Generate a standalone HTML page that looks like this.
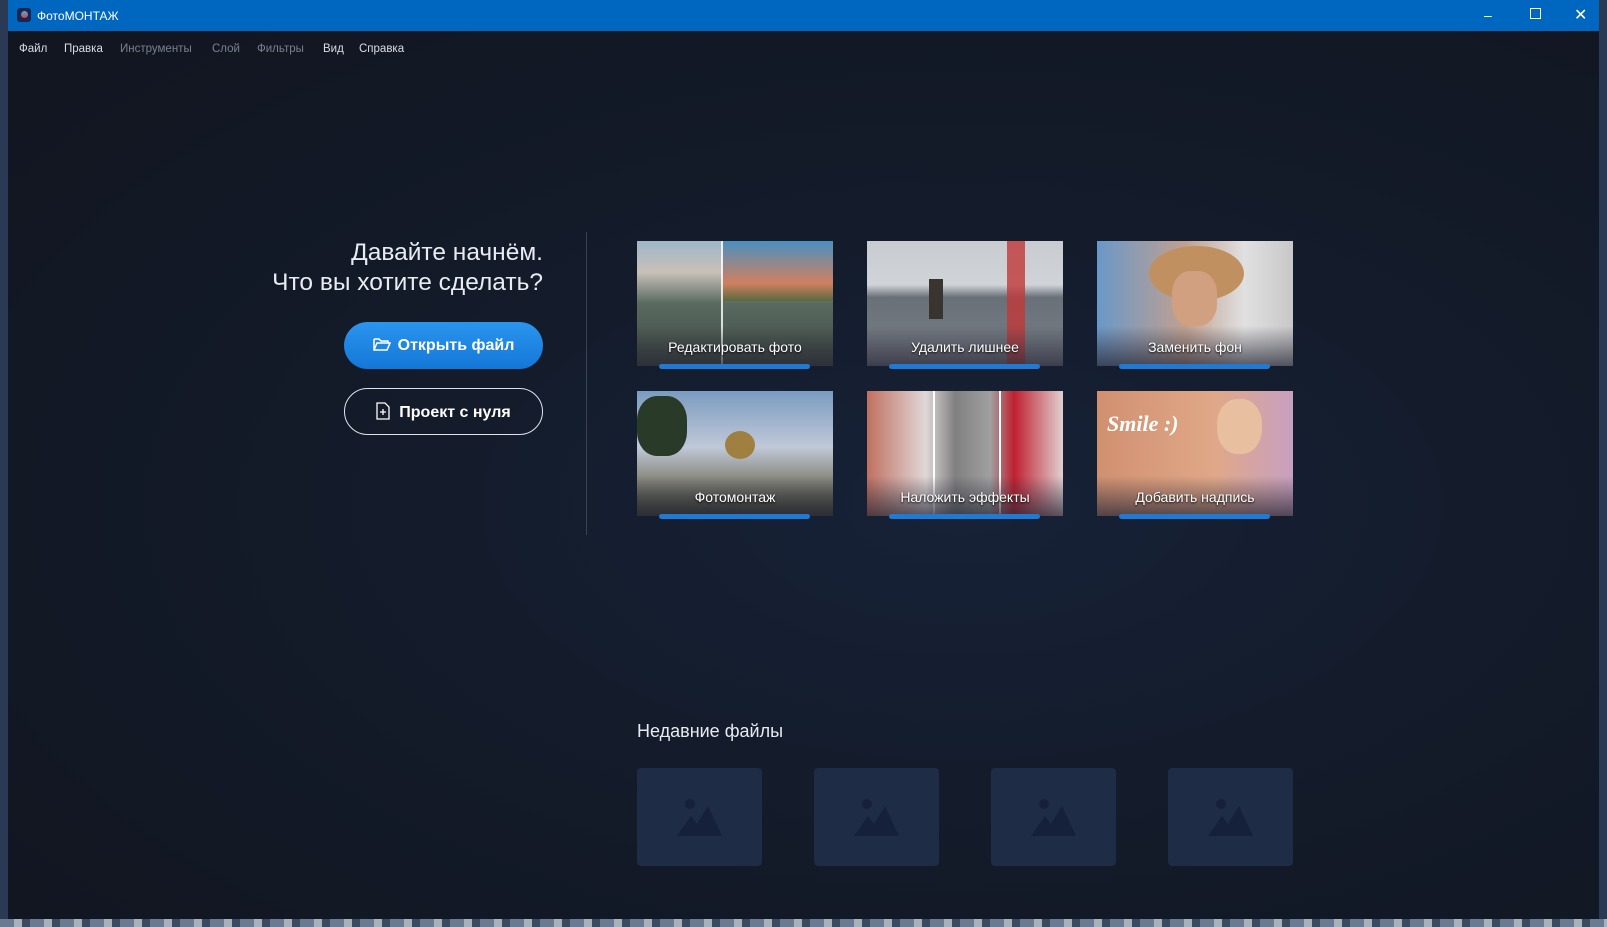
<!DOCTYPE html>
<html><head><meta charset="utf-8"><style>
*{margin:0;padding:0;box-sizing:border-box}
body{width:1607px;height:927px;overflow:hidden;background:#2a3a55;font-family:"Liberation Sans","DejaVu Sans",sans-serif;position:relative}
.desk{position:absolute;left:0;top:919px;width:1607px;height:8px;background:repeating-linear-gradient(90deg,#6a7a90 0 14px,#a8b0bc 14px 22px,#3a4a60 22px 30px)}
.win{position:absolute;left:8px;top:0;width:1591px;height:919px;background:radial-gradient(ellipse at 60% 55%,#172238 0%,#131a28 50%,#11151f 100%)}
.tb{position:absolute;left:0;top:0;width:100%;height:31px;background:#0067c0;color:#fff;font-size:12px}
.tb .ic{position:absolute;left:9px;top:8px;width:14px;height:14px;background:#1c2550;border-radius:3px}
.tb .ic:after{content:"";position:absolute;left:4px;top:3px;width:7px;height:7px;border-radius:50%;background:linear-gradient(#5ac,#c45)}
.tb .t{position:absolute;left:29px;top:9px}
.ctl{position:absolute;top:7px;color:#fff;font-size:14px}
.menu{position:absolute;top:43px;font-size:11.5px;color:#d8dde5}
.menu.d{color:#7a8090}
.h{position:absolute;right:1056px;top:238px;text-align:right;color:#e8ecf2;font-size:24.5px;line-height:30px}
.btn{position:absolute;left:336px;width:199px;height:47px;border-radius:24px;color:#fff;font-weight:bold;font-size:16px;text-align:center;line-height:47px}
.b1{top:322px;background:linear-gradient(#2a95ee,#1477d8)}
.b2{top:388px;border:1.5px solid #e0e4ea}
.div{position:absolute;left:578px;top:232px;width:1px;height:303px;background:#3a4150}
.tile{position:absolute;width:196px;height:125px;overflow:hidden}
.tile span{position:absolute;left:0;right:0;bottom:11px;text-align:center;color:#fff;font-size:14px;text-shadow:0 1px 2px #000;z-index:2}
.tile:after{content:"";position:absolute;left:0;right:0;bottom:0;height:40px;background:linear-gradient(rgba(40,40,50,0),rgba(40,40,55,.75))}
.bar{position:absolute;width:151px;height:5px;border-radius:3px;background:#1f7ad6}
.rt{position:absolute;left:629px;top:721px;color:#e8ecf2;font-size:18px}
.th{position:absolute;top:768px;width:125px;height:98px;background:#1f2c45;border-radius:4px}
</style></head><body>
<div class="desk"></div>
<div class="win">
<div class="tb"><div class="ic"></div><div class="t">ФотоМОНТАЖ</div>
<div class="ctl" style="left:1476px">&#8211;</div><div class="ctl" style="left:1522px;top:8px;width:11px;height:11px;border:1px solid #fff"></div><div class="ctl" style="left:1566px;font-size:16px;top:5px">&#10005;</div></div>
<div class="menu" style="left:11px">Файл</div><div class="menu" style="left:56px">Правка</div><div class="menu d" style="left:112px">Инструменты</div><div class="menu d" style="left:204px">Слой</div><div class="menu d" style="left:249px">Фильтры</div><div class="menu" style="left:315px">Вид</div><div class="menu" style="left:351px">Справка</div>
<div class="h">Давайте начнём.<br>Что вы хотите сделать?</div>
<div class="btn b1"><svg width="18" height="16" viewBox="0 0 18 16" style="vertical-align:-2px;margin-right:7px"><path d="M1 3h5l2 2h7v2M1 3v11h13l3-7H4l-3 7" fill="none" stroke="#fff" stroke-width="1.5"/></svg>Открыть файл</div>
<div class="btn b2"><svg width="14" height="18" viewBox="0 0 14 18" style="vertical-align:-3px;margin-right:9px"><path d="M1 1h8l4 4v12H1z M7 7v6M4 10h6" fill="none" stroke="#fff" stroke-width="1.3"/></svg>Проект с нуля</div>
<div class="div"></div>

<div class="tile" style="left:629px;top:241px;background:linear-gradient(180deg,#9fb6c8 0%,#c8c0b8 25%,#5a6a60 50%,#3e4a40 100%)"><div style="position:absolute;left:84px;top:0;width:2px;height:125px;background:#fff;opacity:.8"></div><div style="position:absolute;left:86px;top:0;right:0;height:60px;background:linear-gradient(#4a90c0,#d08060 70%,#5a6a40)"></div><span>Редактировать фото</span></div>
<div class="bar" style="left:651px;top:364px"></div>
<div class="tile" style="left:859px;top:241px;background:linear-gradient(180deg,#c8ccd0 0%,#d0d4d8 35%,#6a7078 45%,#7a8088 100%)"><div style="position:absolute;left:140px;top:0;width:18px;height:125px;background:#c03838;opacity:.8"></div><div style="position:absolute;left:62px;top:38px;width:14px;height:40px;background:#3a3430"></div><span>Удалить лишнее</span></div>
<div class="bar" style="left:881px;top:364px"></div>
<div class="tile" style="left:1089px;top:241px;background:linear-gradient(90deg,#6a98c8 0%,#c0a090 45%,#e0e0e0 75%,#c8c8c8)"><div style="position:absolute;left:52px;top:5px;width:95px;height:55px;border-radius:50%;background:#c09060"></div><div style="position:absolute;left:75px;top:30px;width:45px;height:55px;border-radius:40%;background:#d0a080"></div><span>Заменить фон</span></div>
<div class="bar" style="left:1111px;top:364px"></div>

<div class="tile" style="left:629px;top:391px;background:linear-gradient(180deg,#7a9cc0 0%,#c0c8d8 45%,#8a8a80 70%,#3a4030 100%)"><div style="position:absolute;left:0;top:5px;width:50px;height:60px;border-radius:40%;background:#2a3a28"></div><div style="position:absolute;left:88px;top:40px;width:30px;height:28px;border-radius:50%;background:#a08040"></div><span>Фотомонтаж</span></div>
<div class="bar" style="left:651px;top:514px"></div>
<div class="tile" style="left:859px;top:391px;background:linear-gradient(90deg,#c07060 0%,#e0d8d8 30%,#808080 45%,#a0a0a0 63%,#c02030 75%,#e0d0d0 100%)"><div style="position:absolute;left:66px;top:0;width:2px;height:125px;background:#fff"></div><div style="position:absolute;left:132px;top:0;width:2px;height:125px;background:#fff"></div><span>Наложить эффекты</span></div>
<div class="bar" style="left:881px;top:514px"></div>
<div class="tile" style="left:1089px;top:391px;background:linear-gradient(90deg,#d09070 0%,#e0a888 60%,#c8a0c0 100%)"><div style="position:absolute;left:10px;top:20px;color:#fff;font:italic bold 22px 'Liberation Serif',serif">Smile :)</div><div style="position:absolute;left:120px;top:8px;width:45px;height:55px;border-radius:45%;background:#e8c0a0"></div><span>Добавить надпись</span></div>
<div class="bar" style="left:1111px;top:514px"></div>

<div class="rt">Недавние файлы</div>
<div class="th" style="left:629px"><svg style="position:absolute;left:40px;top:30px" width="46" height="40" viewBox="0 0 46 40"><circle cx="13" cy="6" r="5" fill="#15203a"/><path d="M0 38 L14 18 L20 26 L31 8 L45 38Z" fill="#15203a"/></svg></div>
<div class="th" style="left:806px"><svg style="position:absolute;left:40px;top:30px" width="46" height="40" viewBox="0 0 46 40"><circle cx="13" cy="6" r="5" fill="#15203a"/><path d="M0 38 L14 18 L20 26 L31 8 L45 38Z" fill="#15203a"/></svg></div>
<div class="th" style="left:983px"><svg style="position:absolute;left:40px;top:30px" width="46" height="40" viewBox="0 0 46 40"><circle cx="13" cy="6" r="5" fill="#15203a"/><path d="M0 38 L14 18 L20 26 L31 8 L45 38Z" fill="#15203a"/></svg></div>
<div class="th" style="left:1160px"><svg style="position:absolute;left:40px;top:30px" width="46" height="40" viewBox="0 0 46 40"><circle cx="13" cy="6" r="5" fill="#15203a"/><path d="M0 38 L14 18 L20 26 L31 8 L45 38Z" fill="#15203a"/></svg></div>
</div>
</body></html>
